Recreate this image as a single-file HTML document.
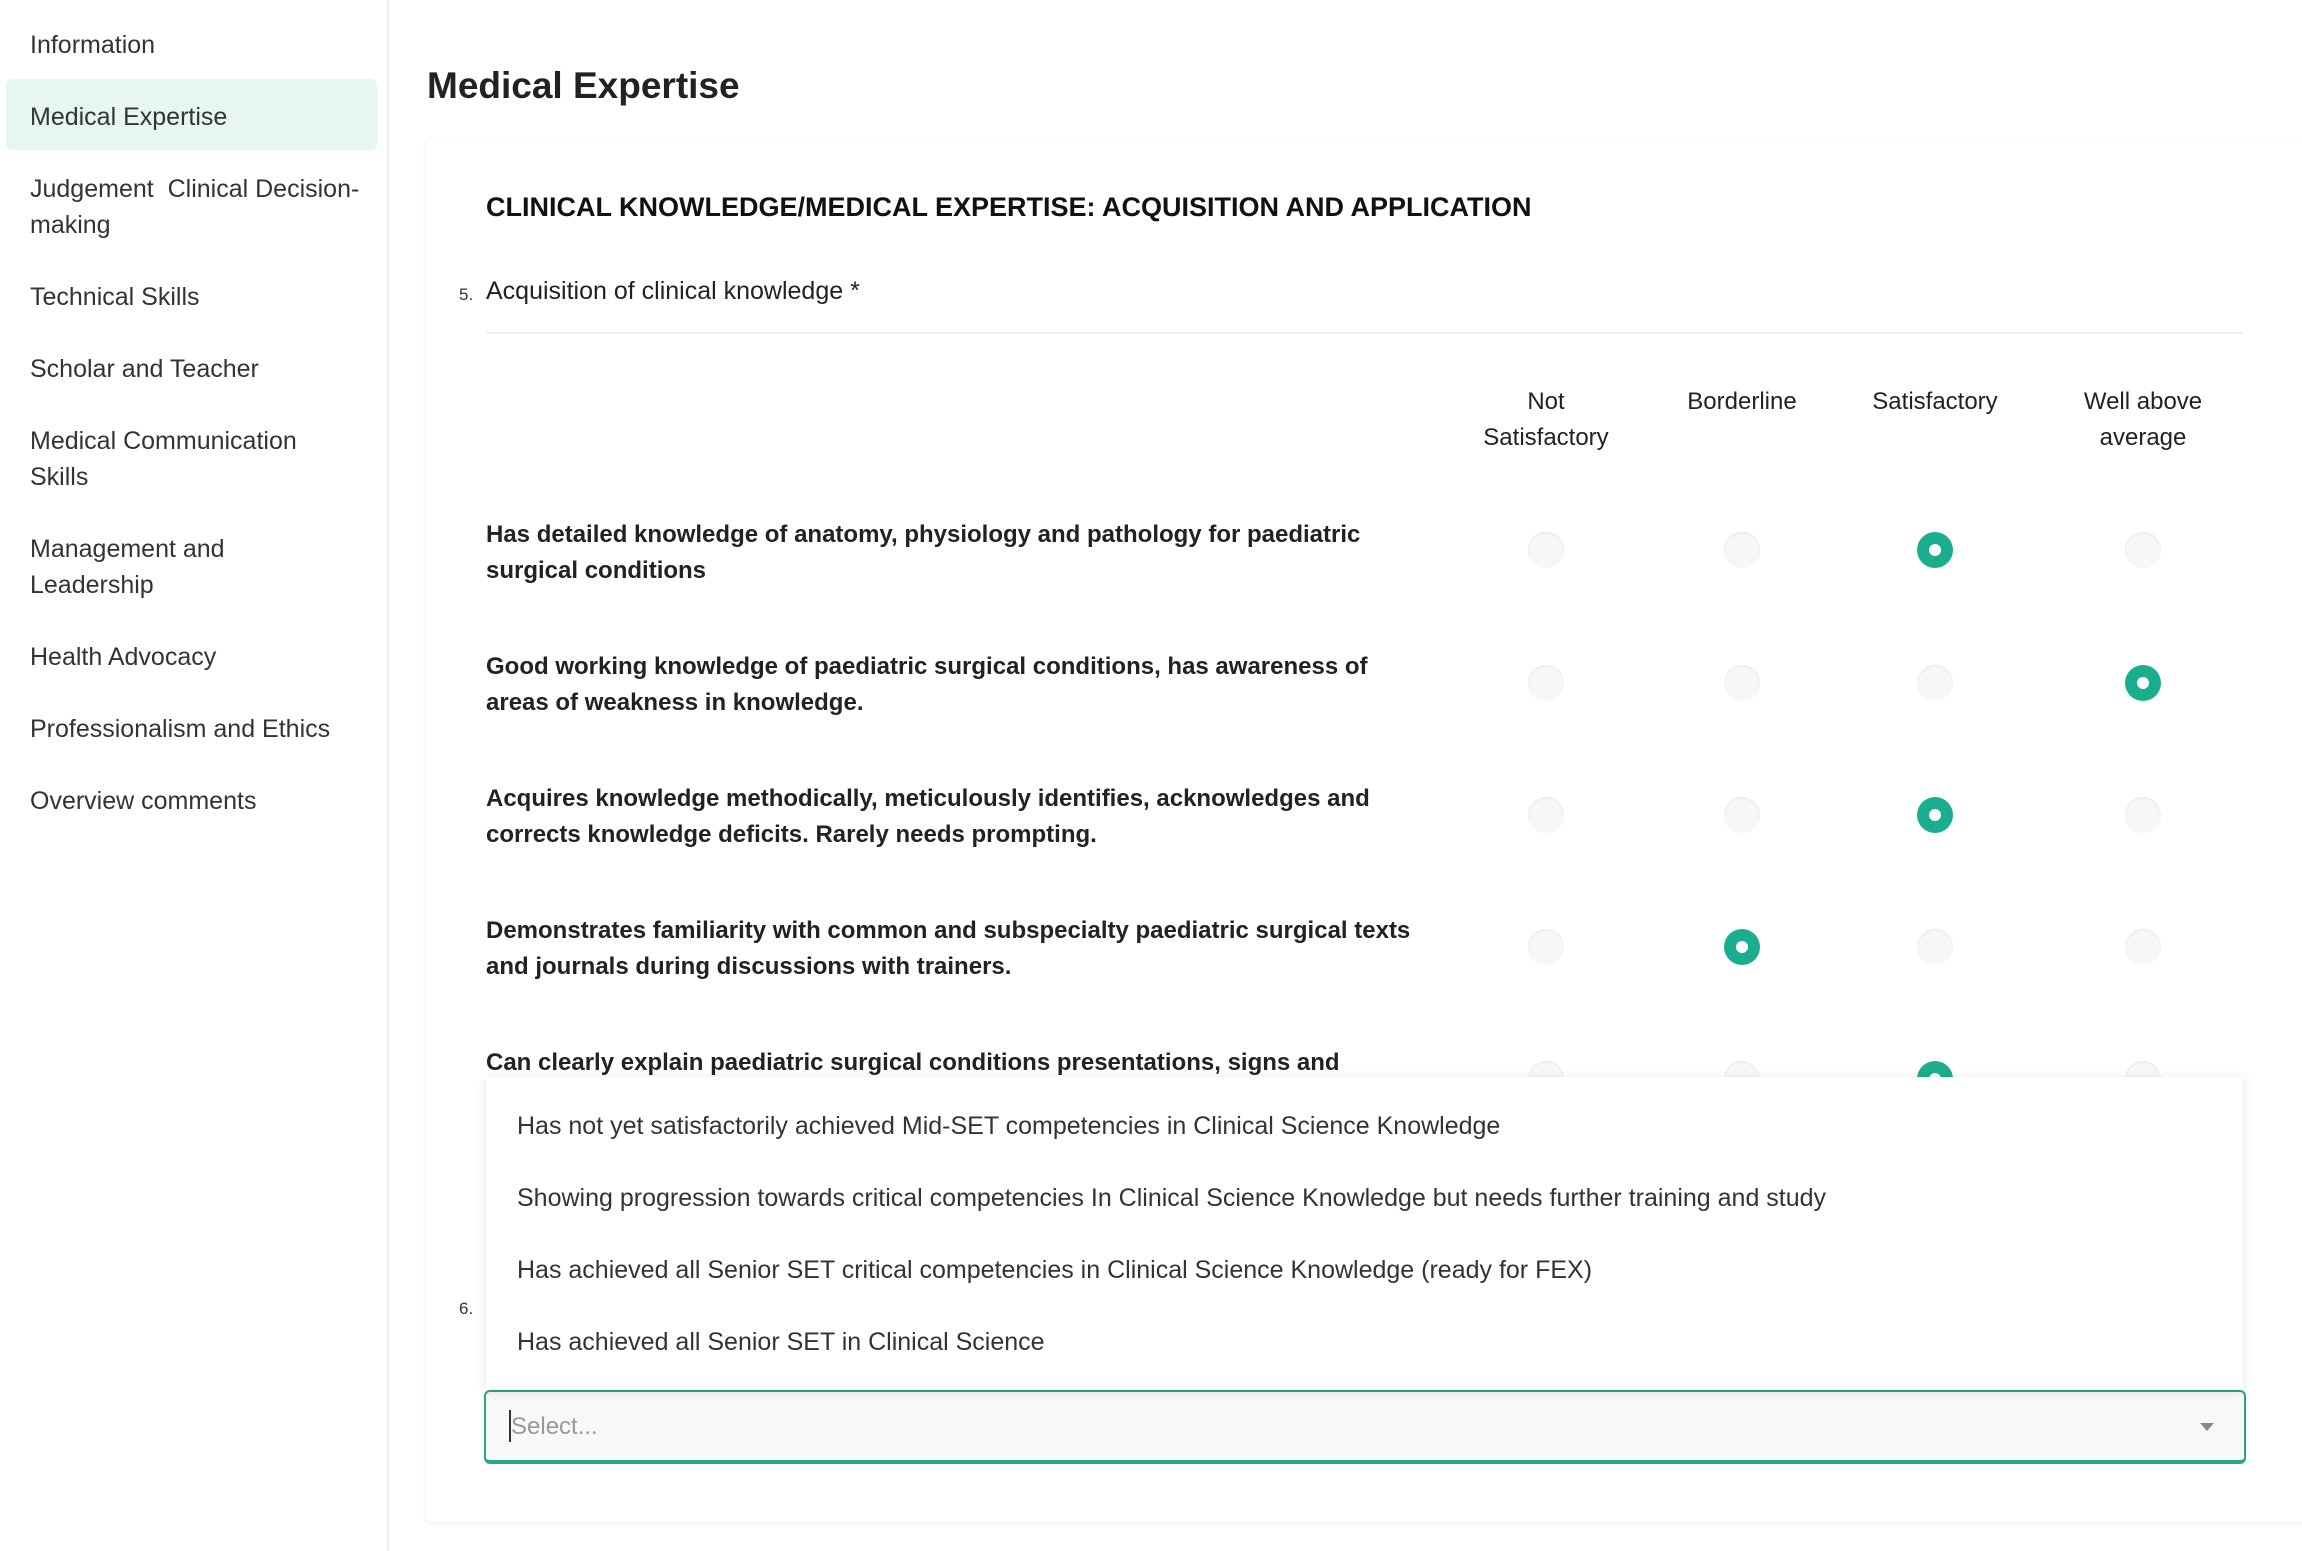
<!DOCTYPE html>
<html><head><meta charset="utf-8"><style>
*{margin:0;padding:0;box-sizing:border-box}
body{width:2302px;height:1551px;background:#fff;font-family:"Liberation Sans",sans-serif;color:#222;position:relative;overflow:hidden}
.side{position:absolute;left:0;top:0;width:389px;height:1551px;border-right:2px solid #ececec;background:#fff}
.it{position:absolute;left:30px;font-size:25px;line-height:36px;color:#333}
.act{position:absolute;left:6px;top:79px;width:371px;height:71px;background:#e8f6f2;border-radius:6px}
.abs{position:absolute;white-space:nowrap}
.card{position:absolute;left:426px;top:138px;width:1900px;height:1384px;background:#fff;box-shadow:0 1px 4px rgba(0,0,0,.08);border-radius:4px}
.rt{font-size:24px;font-weight:bold;line-height:36px;color:#222;left:486px}
.hd{font-size:24px;line-height:36px;text-align:center;color:#222;width:240px}
.r{position:absolute;width:36px;height:36px;border-radius:50%;background:#f7f7f7;box-shadow:inset 0 1px 2px rgba(0,0,0,.08)}
.r.s{background:#1aae8f;box-shadow:none}
.r.s:after{content:"";position:absolute;left:12px;top:12px;width:12px;height:12px;border-radius:50%;background:#fff}
.menu{position:absolute;left:486px;top:1077px;width:1757px;height:312px;background:#fff;box-shadow:0 2px 10px rgba(0,0,0,.12);z-index:5}
.op{position:absolute;left:31px;font-size:25px;color:#333;white-space:nowrap}
</style></head><body>
<div class="side">
<div class="act"></div>
<div class="it" style="top:27px">Information</div>
<div class="it" style="top:99px">Medical Expertise</div>
<div class="it" style="top:171px">Judgement&nbsp; Clinical Decision-<br>making</div>
<div class="it" style="top:279px">Technical Skills</div>
<div class="it" style="top:351px">Scholar and Teacher</div>
<div class="it" style="top:423px">Medical Communication<br>Skills</div>
<div class="it" style="top:531px">Management and<br>Leadership</div>
<div class="it" style="top:639px">Health Advocacy</div>
<div class="it" style="top:711px">Professionalism and Ethics</div>
<div class="it" style="top:783px">Overview comments</div>
</div>
<div class="abs" style="left:427px;top:65px;font-size:37px;font-weight:bold;color:#222">Medical Expertise</div>
<div class="card"></div>
<div class="abs" style="left:486px;top:192px;font-size:27px;font-weight:bold;color:#111">CLINICAL KNOWLEDGE/MEDICAL EXPERTISE: ACQUISITION AND APPLICATION</div>
<div class="abs" style="left:459px;top:285px;font-size:17px;color:#333">5.</div>
<div class="abs" style="left:486px;top:277px;font-size:25px;color:#222">Acquisition of clinical knowledge *</div>
<div class="abs" style="left:486px;top:332px;width:1757px;height:2px;background:#eee"></div>
<div class="abs hd" style="left:1426px;top:384px">Not<br>Satisfactory</div>
<div class="abs hd" style="left:1622px;top:384px">Borderline</div>
<div class="abs hd" style="left:1815px;top:384px">Satisfactory</div>
<div class="abs hd" style="left:2023px;top:384px">Well above<br>average</div>

<div class="abs rt" style="top:517px">Has detailed knowledge of anatomy, physiology and pathology for paediatric<br>surgical conditions</div>
<div class="abs rt" style="top:649px">Good working knowledge of paediatric surgical conditions, has awareness of<br>areas of weakness in knowledge.</div>
<div class="abs rt" style="top:781px">Acquires knowledge methodically, meticulously identifies, acknowledges and<br>corrects knowledge deficits. Rarely needs prompting.</div>
<div class="abs rt" style="top:913px">Demonstrates familiarity with common and subspecialty paediatric surgical texts<br>and journals during discussions with trainers.</div>
<div class="abs rt" style="top:1045px">Can clearly explain paediatric surgical conditions presentations, signs and</div>

<div class="r" style="left:1528px;top:532px"></div><div class="r" style="left:1724px;top:532px"></div><div class="r s" style="left:1917px;top:532px"></div><div class="r" style="left:2125px;top:532px"></div>
<div class="r" style="left:1528px;top:665px"></div><div class="r" style="left:1724px;top:665px"></div><div class="r" style="left:1917px;top:665px"></div><div class="r s" style="left:2125px;top:665px"></div>
<div class="r" style="left:1528px;top:797px"></div><div class="r" style="left:1724px;top:797px"></div><div class="r s" style="left:1917px;top:797px"></div><div class="r" style="left:2125px;top:797px"></div>
<div class="r" style="left:1528px;top:929px"></div><div class="r s" style="left:1724px;top:929px"></div><div class="r" style="left:1917px;top:929px"></div><div class="r" style="left:2125px;top:929px"></div>
<div class="r" style="left:1528px;top:1061px"></div><div class="r" style="left:1724px;top:1061px"></div><div class="r s" style="left:1917px;top:1061px"></div><div class="r" style="left:2125px;top:1061px"></div>

<div class="menu">
<div class="op" style="top:35px">Has not yet satisfactorily achieved Mid-SET competencies in Clinical Science Knowledge</div>
<div class="op" style="top:107px">Showing progression towards critical competencies In Clinical Science Knowledge but needs further training and study</div>
<div class="op" style="top:179px">Has achieved all Senior SET critical competencies in Clinical Science Knowledge (ready for FEX)</div>
<div class="op" style="top:251px">Has achieved all Senior SET in Clinical Science</div>
</div>
<div class="abs" style="left:459px;top:1299px;font-size:17px;color:#333">6.</div>
<div class="abs" style="left:484px;top:1390px;width:1762px;height:74px;border:2px solid #2aa58a;border-bottom-width:4px;border-radius:6px;background:#f8f8f8"></div>
<div class="abs" style="left:509px;top:1410px;width:2px;height:32px;background:#333"></div>
<div class="abs" style="left:511px;top:1413px;font-size:24px;color:#999">Select...</div>
<div class="abs" style="left:2200px;top:1423px;width:0;height:0;border-left:7px solid transparent;border-right:7px solid transparent;border-top:8px solid #888"></div>
</body></html>
